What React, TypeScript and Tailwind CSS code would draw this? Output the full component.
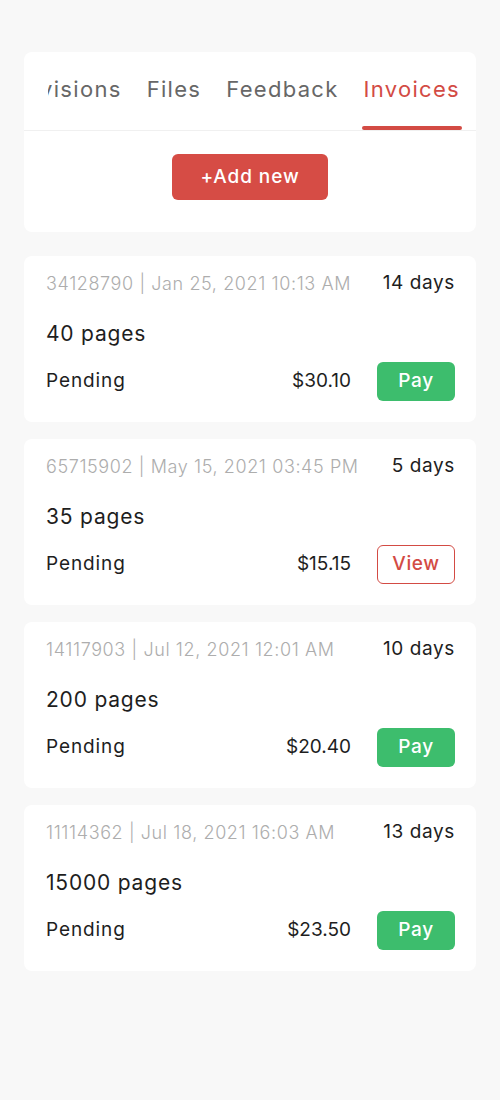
import React from "react";

type Invoice = {
  id: string;
  date: string;
  days: string;
  pages: string;
  price: string;
  action: "pay" | "view";
};

const invoices: Invoice[] = [
  { id: "34128790", date: "Jan 25, 2021 10:13 AM", days: "14 days", pages: "40 pages", price: "$30.10", action: "pay" },
  { id: "65715902", date: "May 15, 2021 03:45 PM", days: "5 days", pages: "35 pages", price: "$15.15", action: "view" },
  { id: "14117903", date: "Jul 12, 2021 12:01 AM", days: "10 days", pages: "200 pages", price: "$20.40", action: "pay" },
  { id: "11114362", date: "Jul 18, 2021 16:03 AM", days: "13 days", pages: "15000 pages", price: "$23.50", action: "pay" },
];

const tabs = ["Revisions", "Files", "Feedback", "Invoices"];

export default function App() {
  return (
    <div
      className="min-h-[1100px] w-[500px] bg-[#f8f8f8] px-6 pt-[52px]"
      style={{ fontFamily: "Inter, 'Open Sans', sans-serif" }}
    >
      <div className="rounded-lg bg-white">
        <div className="ml-6 flex h-[78px] justify-end gap-[21px] overflow-hidden pr-[14px]">
          {tabs.map((t) => {
            const active = t === "Invoices";
            return (
              <div key={t} className="relative flex shrink-0 flex-col items-center">
                <div
                  className={`flex h-[74px] items-center px-[2px] pt-[1px] text-[22px] tracking-[1.3px] ${
                    active ? "text-[#d34b44]" : "text-[#676767]"
                  }`}
                >
                  {t}
                </div>
                <div className={`h-[4px] w-full rounded-full ${active ? "bg-[#d34b44]" : "bg-transparent"}`} />
              </div>
            );
          })}
        </div>
        <div className="h-px bg-[#f0f0f0]" />
        <div className="flex justify-center pb-[32px] pt-[23px]">
          <button className="flex h-[46px] w-[156px] items-center justify-center rounded-md bg-[#d64c45] text-[19px] font-medium tracking-[0.9px] text-white">
            +Add new
          </button>
        </div>
      </div>

      <div className="mt-6 flex flex-col gap-[17px]">
        {invoices.map((inv) => (
          <div key={inv.id} className="rounded-lg bg-white pb-[21px] pl-[22px] pr-[21px] pt-[15px]">
            <div className="flex h-[24px] items-center justify-between">
              <span className="text-[18px] font-light tracking-[0.6px] text-[#adadad]">
                {inv.id} | {inv.date}
              </span>
              <span className="text-[19px] tracking-[0.6px] text-[#1e1e1e]">{inv.days}</span>
            </div>
            <div className="mt-[25px] flex h-[28px] items-center text-[21px] tracking-[0.8px] text-[#1e1e1e]">
              {inv.pages}
            </div>
            <div className="mt-[14px] flex h-[39px] items-center">
              <span className="flex-1 text-[19px] tracking-[0.9px] text-[#1e1e1e]">Pending</span>
              <span className="mr-[26px] text-[19px] text-[#1e1e1e]">{inv.price}</span>
              {inv.action === "pay" ? (
                <button className="flex h-[39px] w-[78px] items-center justify-center rounded-md bg-[#3dbd6d] text-[19px] font-medium tracking-[0.6px] text-white">
                  Pay
                </button>
              ) : (
                <button className="flex h-[39px] w-[78px] items-center justify-center rounded-md border-[1.5px] border-[#d34b44] text-[19px] font-medium tracking-[0.6px] text-[#d34b44]">
                  View
                </button>
              )}
            </div>
          </div>
        ))}
      </div>
    </div>
  );
}
